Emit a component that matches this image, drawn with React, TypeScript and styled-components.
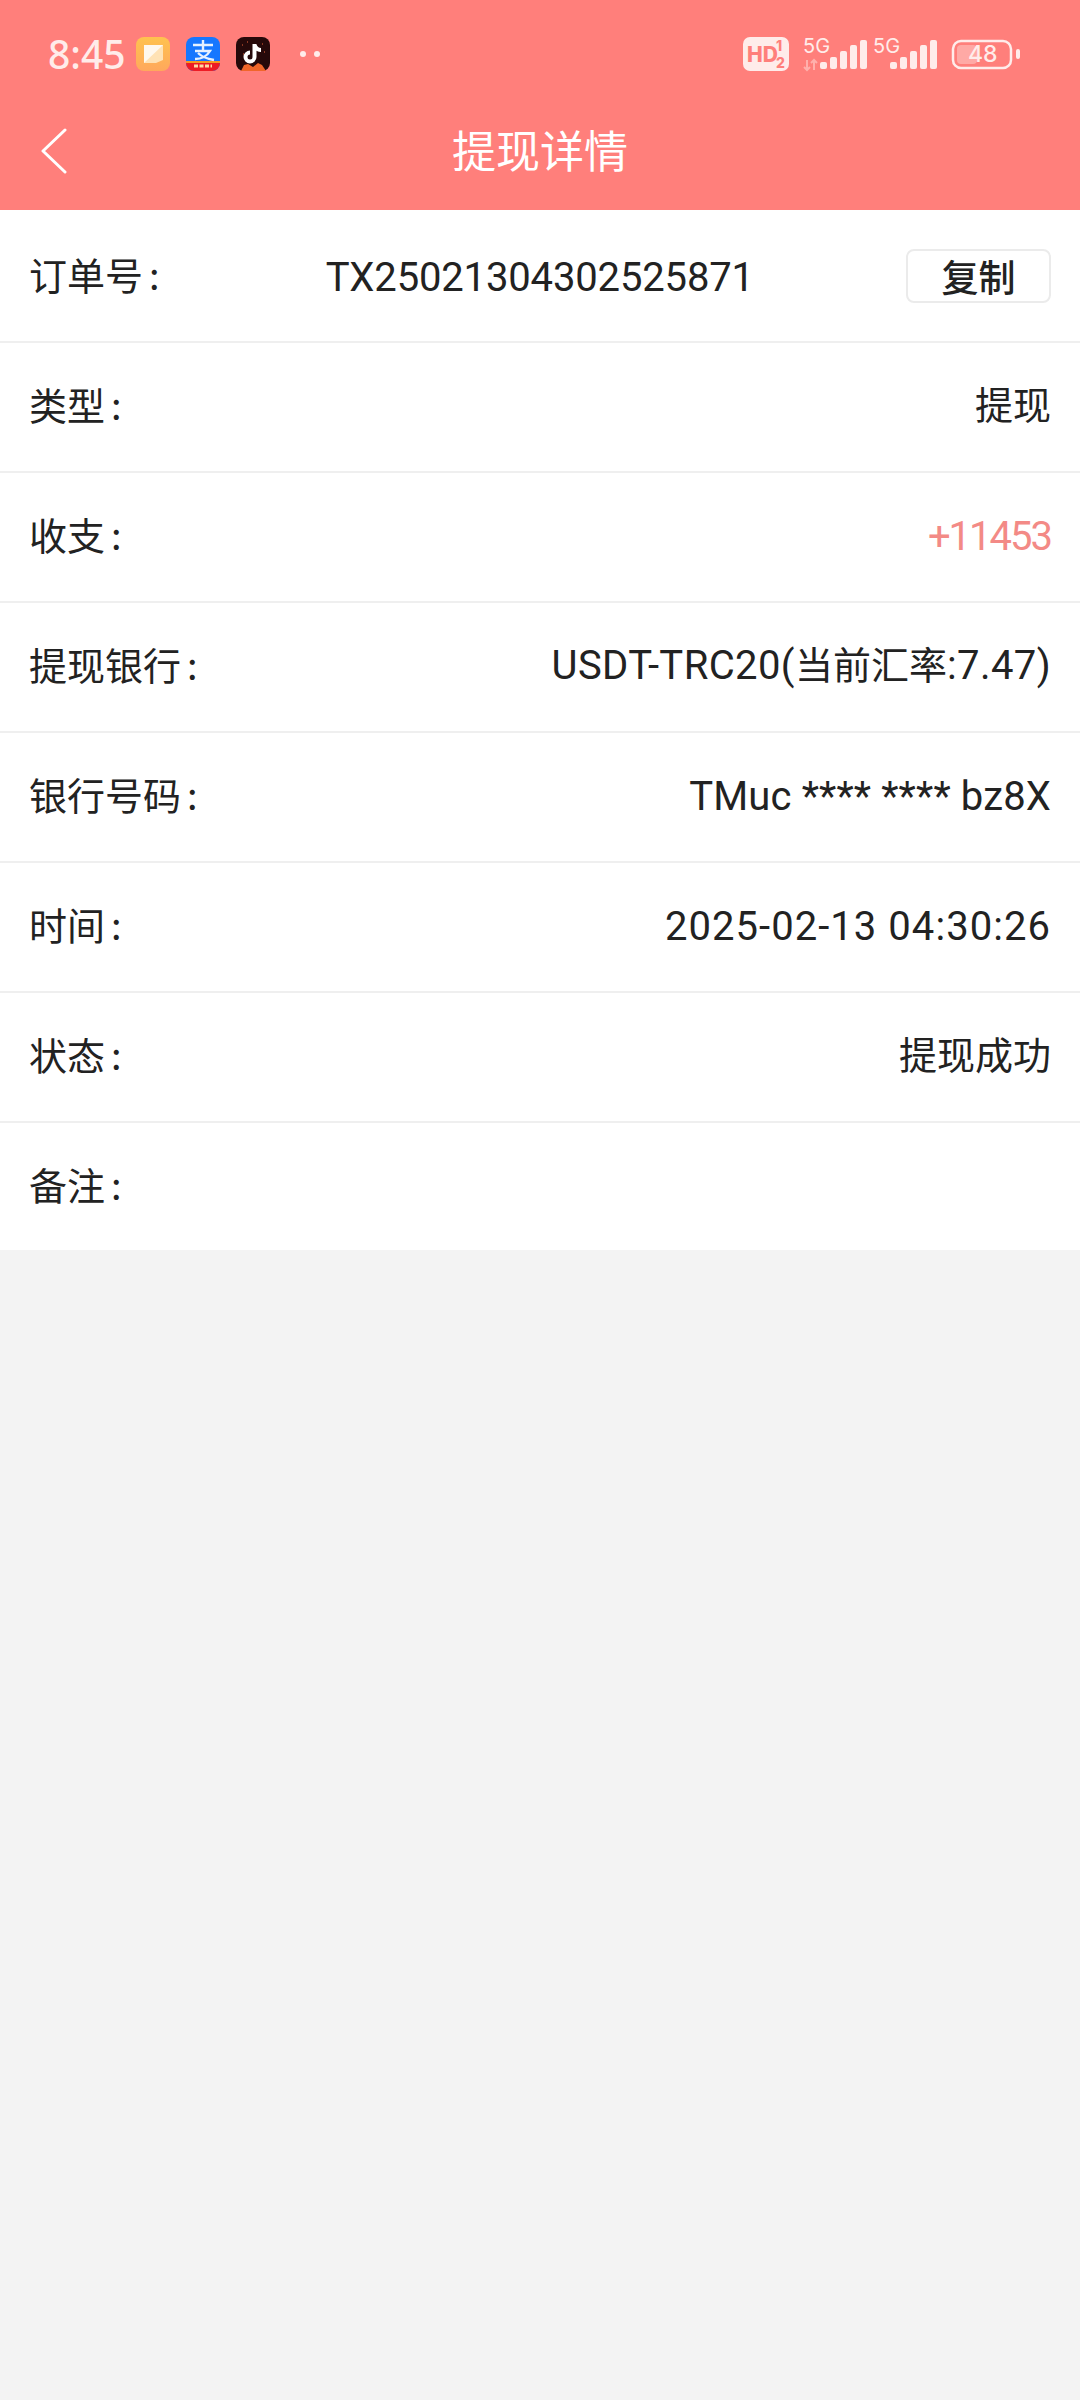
import React from 'react';
import styled, { createGlobalStyle } from 'styled-components';

const GlobalStyle = createGlobalStyle`
  html, body {
    margin: 0;
    padding: 0;
    background: #f3f3f3;
  }
  * {
    box-sizing: border-box;
  }
`;

const Page = styled.div`
  width: 1080px;
  height: 2400px;
  background: #f3f3f3;
  font-family: "Noto Sans CJK SC", "Noto Sans", sans-serif;
  overflow: hidden;
`;

const Header = styled.header`
  height: 210px;
  background: #ff7f7b;
  color: #fff;
`;

const StatusBar = styled.div`
  height: 104px;
  padding: 32px 59px 0 48px;
  display: flex;
  justify-content: space-between;
  align-items: flex-start;
`;

const StatusGroup = styled.div`
  display: flex;
  align-items: center;
  height: 44px;
`;

const Clock = styled.span`
  font-family: "Noto Sans", sans-serif;
  font-size: 39px;
  font-weight: 500;
  line-height: 40px;
  color: #ffecea;
  width: 88px;
`;

const AppIcon = styled.svg`
  width: 34px;
  height: 34px;
  margin-right: 16px;
  display: block;
`;

const Dots = styled.div`
  display: flex;
  gap: 8px;
  margin-left: 14px;
  i {
    width: 6px;
    height: 6px;
    border-radius: 50%;
    background: #ffecea;
  }
`;

const NavBar = styled.div`
  height: 106px;
  position: relative;
  display: flex;
  align-items: center;
  justify-content: center;
  padding-bottom: 16px;
`;

const BackIcon = styled.svg`
  position: absolute;
  left: 40px;
  top: 24px;
  width: 28px;
  height: 46px;
`;

const Title = styled.h1`
  margin: 0;
  font-size: 44px;
  font-weight: 400;
  line-height: 60px;
  color: #fff;
`;

const List = styled.div`
  background: #fff;
`;

const Row = styled.div`
  height: 130px;
  padding: 0 29px 6px;
  display: flex;
  align-items: center;
  justify-content: space-between;
  border-bottom: 2px solid #efefef;
  color: #222;
  &:first-child {
    height: 133px;
    padding-bottom: 4px;
  }
  &:last-child {
    height: 127px;
    border-bottom: none;
  }
`;

const Label = styled.span`
  font-size: 38px;
  line-height: 50px;
`;

const Colon = styled.span`
  margin-left: 6px;
`;

const Value = styled.span<{ $accent?: boolean; $latin?: boolean; $tracking?: number }>`
  font-family: Roboto, "Noto Sans CJK SC", sans-serif;
  font-size: 40px;
  font-weight: 400;
  line-height: 50px;
  padding-top: ${(p) => (p.$latin ? 5 : 0)}px;
  letter-spacing: ${(p) => p.$tracking ?? 0}px;
  color: ${(p) => (p.$accent ? '#f38a86' : '#222')};
`;

const OrderValue = styled(Value)`
  margin-left: 14px;
  padding-top: 9px;
`;

const Cjk = styled.span`
  font-family: "Noto Sans CJK SC", sans-serif;
  font-size: 38px;
  letter-spacing: 0;
`;

const CopyButton = styled.button`
  width: 145px;
  height: 54px;
  padding: 0;
  margin-top: 4px;
  background: #fff;
  border: 2px solid #ebebeb;
  border-radius: 8px;
  font-family: inherit;
  font-size: 37px;
  font-weight: 500;
  line-height: 44px;
  color: #222;
`;

const Signal = ({ x }: { x: number }) => (
  <g fill="#ffecea">
    {[7, 12, 18, 24, 29].map((h, i) => (
      <rect key={i} x={x + i * 10} y={37 - h} width="7" height={h} rx="2" />
    ))}
  </g>
);

const App: React.FC = () => {
  return (
    <Page>
      <GlobalStyle />
      <Header>
        <StatusBar>
          <StatusGroup>
            <Clock>8:45</Clock>
            <AppIcon viewBox="0 0 34 34">
              <defs>
                <linearGradient id="noteBg" x1="0" y1="0" x2="0" y2="1">
                  <stop offset="0" stopColor="#ffc24f" />
                  <stop offset="1" stopColor="#ffa85c" />
                </linearGradient>
              </defs>
              <rect width="34" height="34" rx="8" fill="url(#noteBg)" />
              <path d="M8 8h19v15l-7 3H8z" fill="#ffe2b5" />
              <path d="M8 26V8h19z" fill="#fff8ee" />
            </AppIcon>
            <AppIcon viewBox="0 0 34 34">
              <rect width="34" height="34" rx="8" fill="#1677ff" />
              <path d="M0 24h34v2a8 8 0 0 1-8 8H8a8 8 0 0 1-8-8z" fill="#ee1c25" />
              <path d="M0 24h34v2H0z" fill="#f59a23" />
              <path d="M8 29h18" stroke="#ffd9a0" strokeWidth="3" strokeDasharray="4 1.500" />
              <path d="M7 8h20M17 3v11M9 14h15c-3 5-9 8-15 8M12 16c4 4 10 6 16 7" fill="none" stroke="#e6f1ff" strokeWidth="2.400" />
            </AppIcon>
            <AppIcon viewBox="0 0 34 34">
              <rect width="34" height="34" rx="8" fill="#26090a" />
              <path d="M5 34l3-6 4-1 5 3 5-4 4 2 4 6z" fill="#f0662a" />
              <path d="M6 8h1M11 5h1M26 7h1M28 15h1M7 17h1" stroke="#a8452a" strokeWidth="1.500" />
              <path d="M18.500 7v13a4.500 4.500 0 1 1-4.500-4.500M18.500 8c1 3 3 5 6.500 5" fill="none" stroke="#fff" strokeWidth="4" />
            </AppIcon>
            <Dots>
              <i />
              <i />
            </Dots>
          </StatusGroup>
          <StatusGroup>
            <svg width="278" height="44" viewBox="0 0 278 44">
              <rect x="0" y="5" width="46" height="34" rx="7" fill="#ffecea" />
              <text x="4" y="30" fontFamily="Inter" fontWeight="800" fontSize="21" fill="#ff7f7b">HD</text>
              <text x="33" y="19" fontFamily="Inter" fontWeight="800" fontSize="14" fill="#ff7f7b">1</text>
              <text x="33" y="36" fontFamily="Inter" fontWeight="800" fontSize="14" fill="#ff7f7b">2</text>
              <text x="60" y="21" fontFamily="Inter" fontSize="20" fill="#ffecea">5G</text>
              <path d="M64 28v10M61 35l3 3 3-3M71 38V28M68 31l3-3 3 3" fill="none" stroke="#ffb0ac" strokeWidth="2" />
              <Signal x={77} />
              <text x="130" y="21" fontFamily="Inter" fontSize="20" fill="#ffecea">5G</text>
              <Signal x={147} />
              <rect x="210" y="9" width="58" height="27" rx="8" fill="none" stroke="#ffecea" strokeWidth="2.500" />
              <rect x="214" y="13" width="20" height="19" rx="4" fill="#ffa9a5" />
              <text x="225" y="30" fontFamily="Inter" fontWeight="500" fontSize="23" fill="#ffecea">48</text>
              <rect x="273" y="17" width="4" height="10" rx="2" fill="#ffecea" />
            </svg>
          </StatusGroup>
        </StatusBar>
        <NavBar>
          <BackIcon viewBox="0 0 28 46">
            <path d="M25 2L3 23l22 21" fill="none" stroke="#fff" strokeWidth="3" strokeLinecap="round" strokeLinejoin="round" />
          </BackIcon>
          <Title>提现详情</Title>
        </NavBar>
      </Header>
      <List>
        <Row>
          <Label>订单号<Colon>:</Colon></Label>
          <OrderValue $tracking={-0.15}>TX25021304302525871</OrderValue>
          <CopyButton>复制</CopyButton>
        </Row>
        <Row>
          <Label>类型<Colon>:</Colon></Label>
          <Value><Cjk>提现</Cjk></Value>
        </Row>
        <Row>
          <Label>收支<Colon>:</Colon></Label>
          <Value $accent $latin $tracking={-2}>+11453</Value>
        </Row>
        <Row>
          <Label>提现银行<Colon>:</Colon></Label>
          <Value $tracking={0.4}>USDT-TRC20(<Cjk>当前汇率</Cjk>:7.47)</Value>
        </Row>
        <Row>
          <Label>银行号码<Colon>:</Colon></Label>
          <Value $latin $tracking={0.15}>TMuc **** **** bz8X</Value>
        </Row>
        <Row>
          <Label>时间<Colon>:</Colon></Label>
          <Value $latin $tracking={1.05}>2025-02-13 04:30:26</Value>
        </Row>
        <Row>
          <Label>状态<Colon>:</Colon></Label>
          <Value><Cjk>提现成功</Cjk></Value>
        </Row>
        <Row>
          <Label>备注<Colon>:</Colon></Label>
        </Row>
      </List>
    </Page>
  );
};

export default App;
